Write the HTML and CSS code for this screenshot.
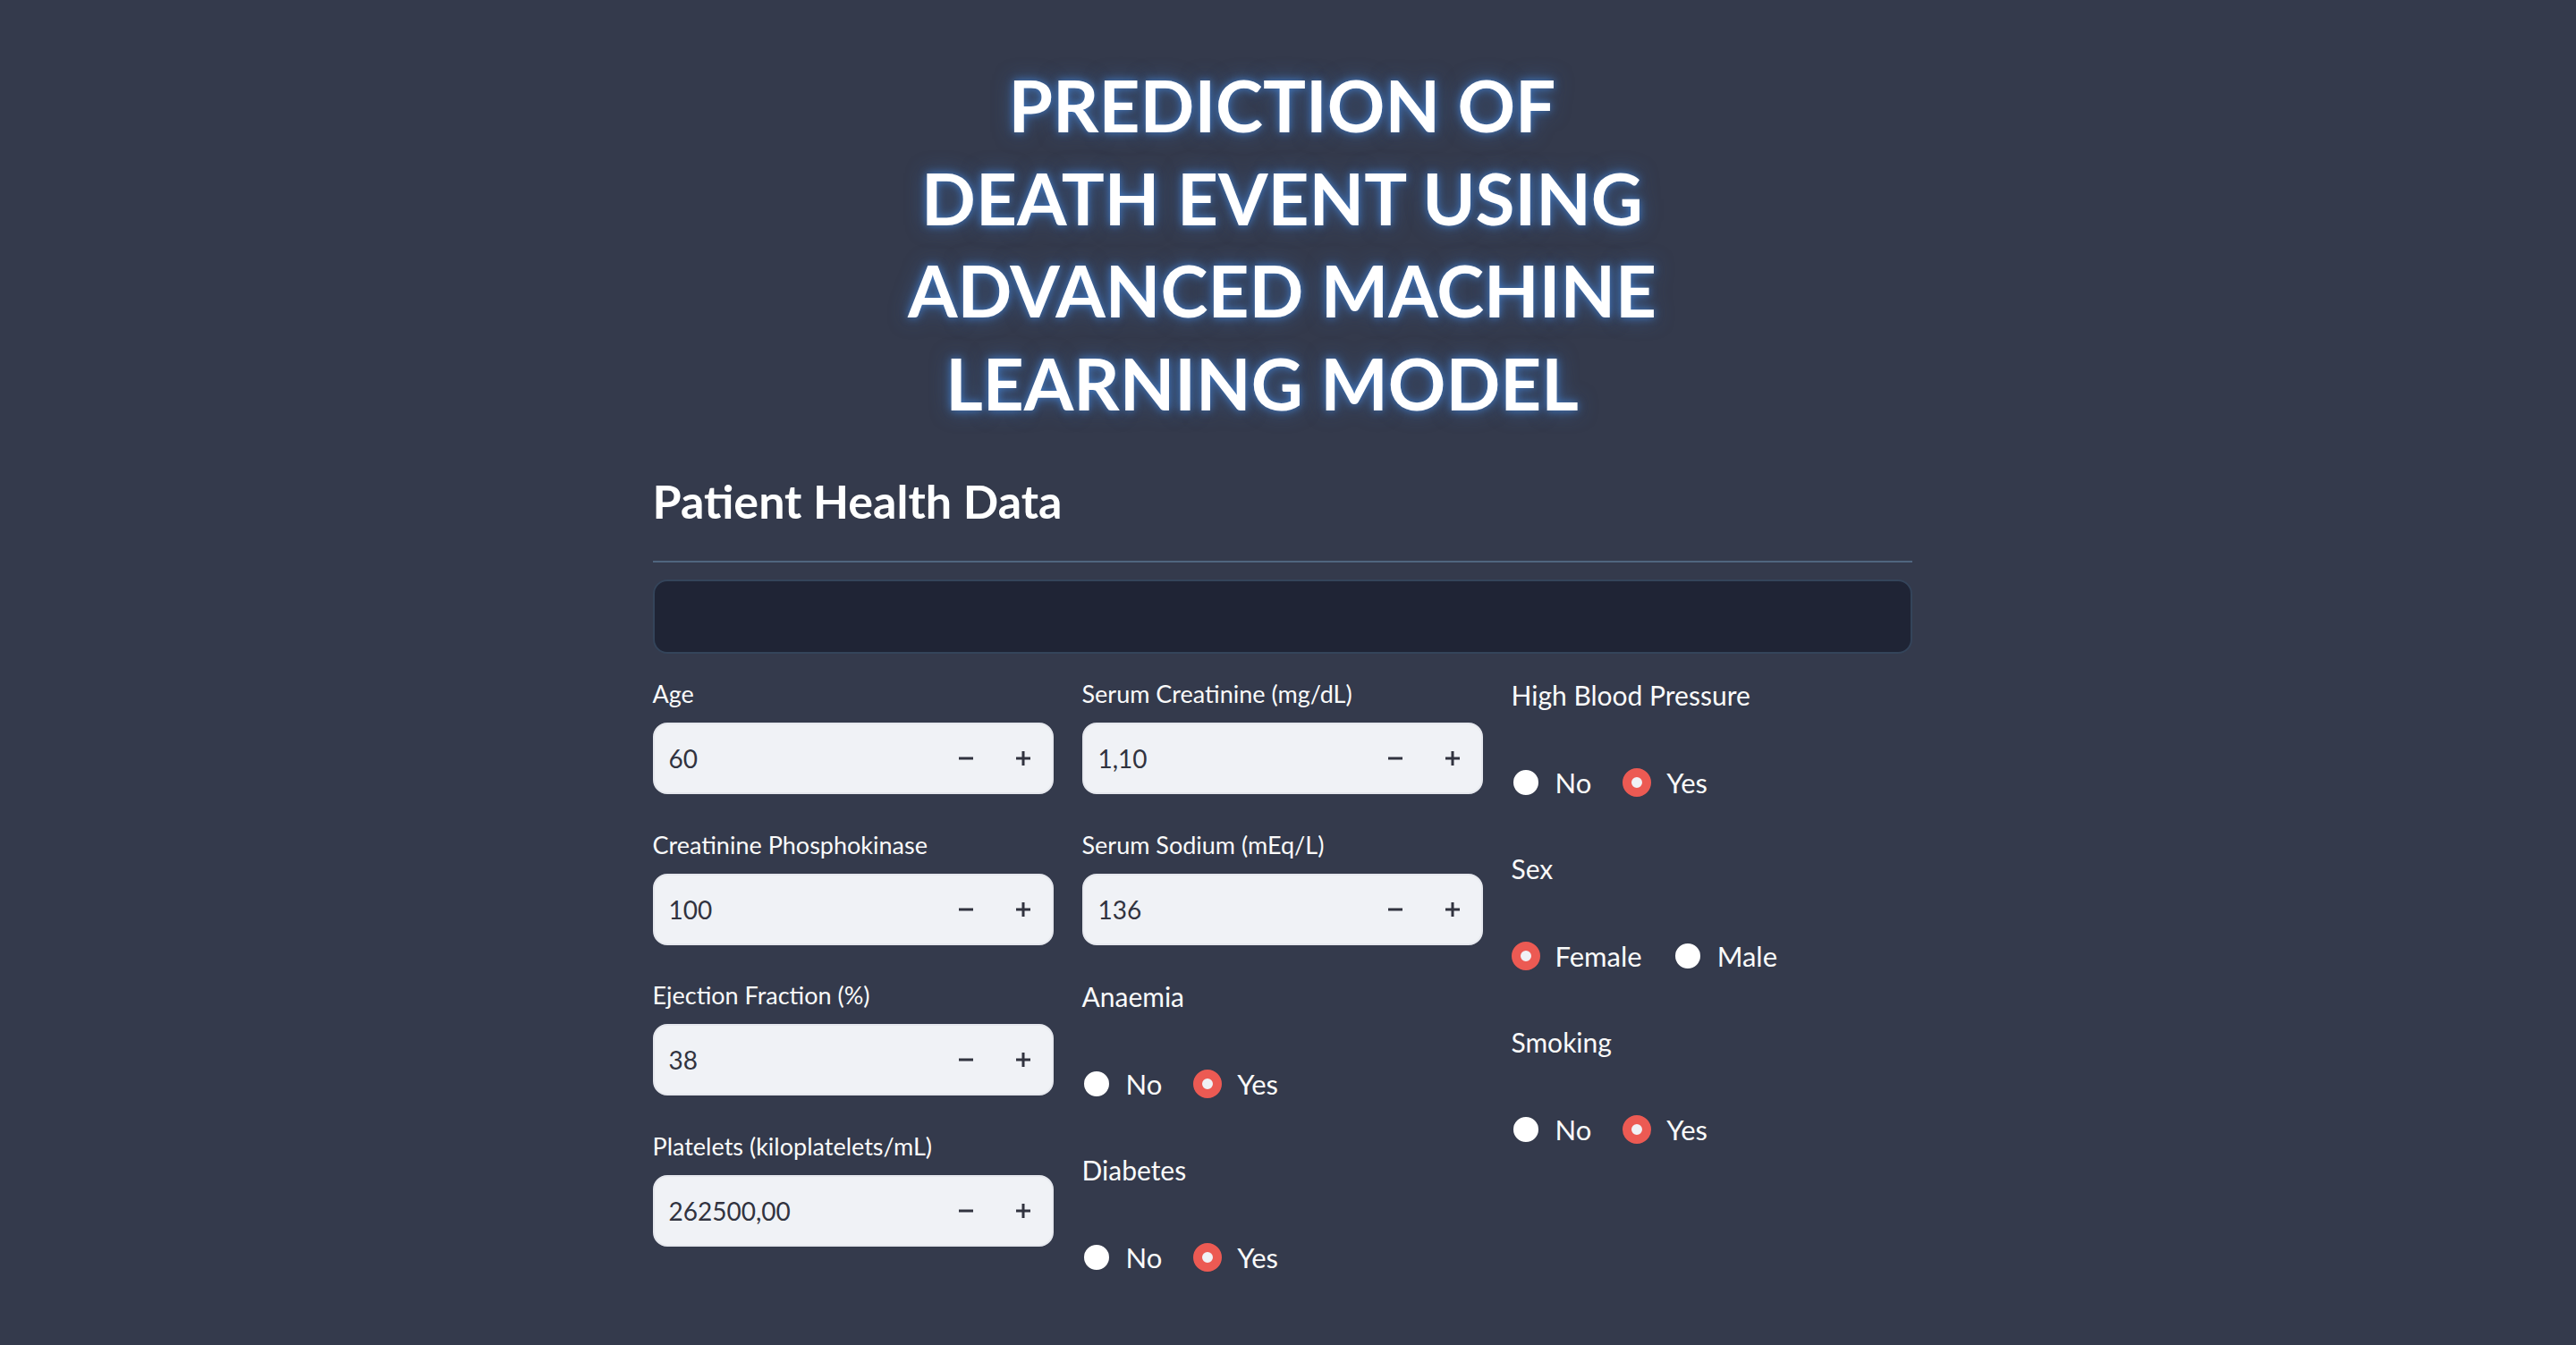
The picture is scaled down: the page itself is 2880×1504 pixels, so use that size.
FILE: index.html
```html
<!DOCTYPE html>
<html lang="en">
<head>
<meta charset="utf-8">
<title>Prediction of Death Event</title>
<link rel="stylesheet" href="styles.css">
</head>
<body>
<main class="app">
  <div class="block">
    <h1 class="title">PREDICTION OF<br>DEATH EVENT USING<br>ADVANCED MACHINE<br><span class="tail">LEARNING MODEL</span></h1>
    <h3 class="section">Patient Health Data</h3>
    <hr class="divider">
    <div class="panel"></div>
    <div class="cols">
      <div class="col">
        <div class="field">
          <label class="field-label">Age</label>
          <div class="num"><span class="num-value">60</span><span class="step"><svg viewBox="0 0 18 18" width="18" height="18"><rect x="1" y="7.5" width="16" height="3" fill="#31333f"/></svg></span><span class="step"><svg viewBox="0 0 18 18" width="18" height="18"><rect x="1" y="7.5" width="16" height="3" fill="#31333f"/><rect x="7.5" y="1" width="3" height="16" fill="#31333f"/></svg></span></div>
        </div>
        <div class="field">
          <label class="field-label">Creatinine Phosphokinase</label>
          <div class="num"><span class="num-value">100</span><span class="step"><svg viewBox="0 0 18 18" width="18" height="18"><rect x="1" y="7.5" width="16" height="3" fill="#31333f"/></svg></span><span class="step"><svg viewBox="0 0 18 18" width="18" height="18"><rect x="1" y="7.5" width="16" height="3" fill="#31333f"/><rect x="7.5" y="1" width="3" height="16" fill="#31333f"/></svg></span></div>
        </div>
        <div class="field">
          <label class="field-label">Ejection Fraction (%)</label>
          <div class="num"><span class="num-value">38</span><span class="step"><svg viewBox="0 0 18 18" width="18" height="18"><rect x="1" y="7.5" width="16" height="3" fill="#31333f"/></svg></span><span class="step"><svg viewBox="0 0 18 18" width="18" height="18"><rect x="1" y="7.5" width="16" height="3" fill="#31333f"/><rect x="7.5" y="1" width="3" height="16" fill="#31333f"/></svg></span></div>
        </div>
        <div class="field">
          <label class="field-label">Platelets (kiloplatelets/mL)</label>
          <div class="num"><span class="num-value">262500,00</span><span class="step"><svg viewBox="0 0 18 18" width="18" height="18"><rect x="1" y="7.5" width="16" height="3" fill="#31333f"/></svg></span><span class="step"><svg viewBox="0 0 18 18" width="18" height="18"><rect x="1" y="7.5" width="16" height="3" fill="#31333f"/><rect x="7.5" y="1" width="3" height="16" fill="#31333f"/></svg></span></div>
        </div>
      </div>
      <div class="col">
        <div class="field">
          <label class="field-label">Serum Creatinine (mg/dL)</label>
          <div class="num"><span class="num-value">1,10</span><span class="step"><svg viewBox="0 0 18 18" width="18" height="18"><rect x="1" y="7.5" width="16" height="3" fill="#31333f"/></svg></span><span class="step"><svg viewBox="0 0 18 18" width="18" height="18"><rect x="1" y="7.5" width="16" height="3" fill="#31333f"/><rect x="7.5" y="1" width="3" height="16" fill="#31333f"/></svg></span></div>
        </div>
        <div class="field">
          <label class="field-label">Serum Sodium (mEq/L)</label>
          <div class="num"><span class="num-value">136</span><span class="step"><svg viewBox="0 0 18 18" width="18" height="18"><rect x="1" y="7.5" width="16" height="3" fill="#31333f"/></svg></span><span class="step"><svg viewBox="0 0 18 18" width="18" height="18"><rect x="1" y="7.5" width="16" height="3" fill="#31333f"/><rect x="7.5" y="1" width="3" height="16" fill="#31333f"/></svg></span></div>
        </div>
        <div class="radio">
          <div class="radio-label">Anaemia</div>
          <div class="radio-options">
            <span class="opt"><span class="dot"></span><span class="opt-text">No</span></span>
            <span class="opt"><span class="dot on"></span><span class="opt-text">Yes</span></span>
          </div>
        </div>
        <div class="radio">
          <div class="radio-label">Diabetes</div>
          <div class="radio-options">
            <span class="opt"><span class="dot"></span><span class="opt-text">No</span></span>
            <span class="opt"><span class="dot on"></span><span class="opt-text">Yes</span></span>
          </div>
        </div>
      </div>
      <div class="col">
        <div class="radio">
          <div class="radio-label">High Blood Pressure</div>
          <div class="radio-options">
            <span class="opt"><span class="dot"></span><span class="opt-text">No</span></span>
            <span class="opt"><span class="dot on"></span><span class="opt-text">Yes</span></span>
          </div>
        </div>
        <div class="radio">
          <div class="radio-label">Sex</div>
          <div class="radio-options">
            <span class="opt"><span class="dot on"></span><span class="opt-text">Female</span></span>
            <span class="opt"><span class="dot"></span><span class="opt-text">Male</span></span>
          </div>
        </div>
        <div class="radio">
          <div class="radio-label">Smoking</div>
          <div class="radio-options">
            <span class="opt"><span class="dot"></span><span class="opt-text">No</span></span>
            <span class="opt"><span class="dot on"></span><span class="opt-text">Yes</span></span>
          </div>
        </div>
      </div>
    </div>
  </div>
</main>
</body>
</html>
```
FILE: styles.css
```css
* { box-sizing: border-box; }
html, body {
  margin: 0;
  padding: 0;
  background: #343a4c;
  color: #fafafa;
  font-family: Lato, "Open Sans", "Noto Sans", sans-serif;
}
body { min-height: 1504px; }
.app {
  display: flex;
  justify-content: center;
  padding-right: 13px;
}
.block {
  width: 1408px;
  padding-top: 66px;
}
.title {
  margin: 0;
  text-align: center;
  font-size: 80px;
  line-height: 103.5px;
  font-weight: 700;
  color: #ffffff;
  letter-spacing: 0;
  text-shadow: 0 0 10px rgba(66, 124, 200, 0.95), 0 0 22px rgba(66, 124, 200, 0.55);
}
.tail { padding-right: 45px; }
.section {
  margin: 47px 0 0;
  font-size: 52px;
  line-height: 67px;
  font-weight: 700;
  color: #ffffff;
}
.divider {
  margin: 33px 0 0;
  border: 0;
  height: 2px;
  background: #50667f;
}
.panel {
  margin-top: 19px;
  height: 83px;
  background: #1f2435;
  border: 2px solid #34445a;
  border-radius: 16px;
}
.cols {
  margin-top: 27px;
  display: grid;
  grid-template-columns: repeat(3, 1fr);
  column-gap: 32px;
}
.col {
  display: flex;
  flex-direction: column;
  gap: 32px;
}
.field {
  height: 136.5px;
  display: flex;
  flex-direction: column;
}
.field-label {
  font-size: 27px;
  line-height: 36px;
  height: 36px;
  margin-bottom: 14px;
  color: #fafafa;
}
.num {
  height: 80px;
  background: #f0f2f6;
  border-radius: 16px;
  border: 2px solid #e6e8ee;
  display: flex;
  align-items: center;
}
.num-value {
  flex: 1;
  padding-left: 16px;
  font-size: 28px;
  color: #31333f;
}
.step {
  width: 64px;
  height: 100%;
  display: flex;
  align-items: center;
  justify-content: center;
}
.radio {
  height: 162px;
  display: flex;
  flex-direction: column;
}
.radio-label {
  font-size: 30px;
  line-height: 38px;
  color: #fafafa;
}
.radio-options {
  margin-top: 59px;
  height: 40px;
  display: flex;
  align-items: center;
}
.opt {
  display: flex;
  align-items: center;
  margin-right: 35px;
}
.dot {
  width: 32px;
  height: 32px;
  border-radius: 50%;
  background: #ffffff;
  border: 2px solid #343a4c;
  flex: none;
}
.dot.on {
  background: #f0f2f6;
  border: 10px solid #ec5a53;
}
.opt-text {
  margin-left: 17px;
  font-size: 31px;
  color: #fafafa;
}
```
